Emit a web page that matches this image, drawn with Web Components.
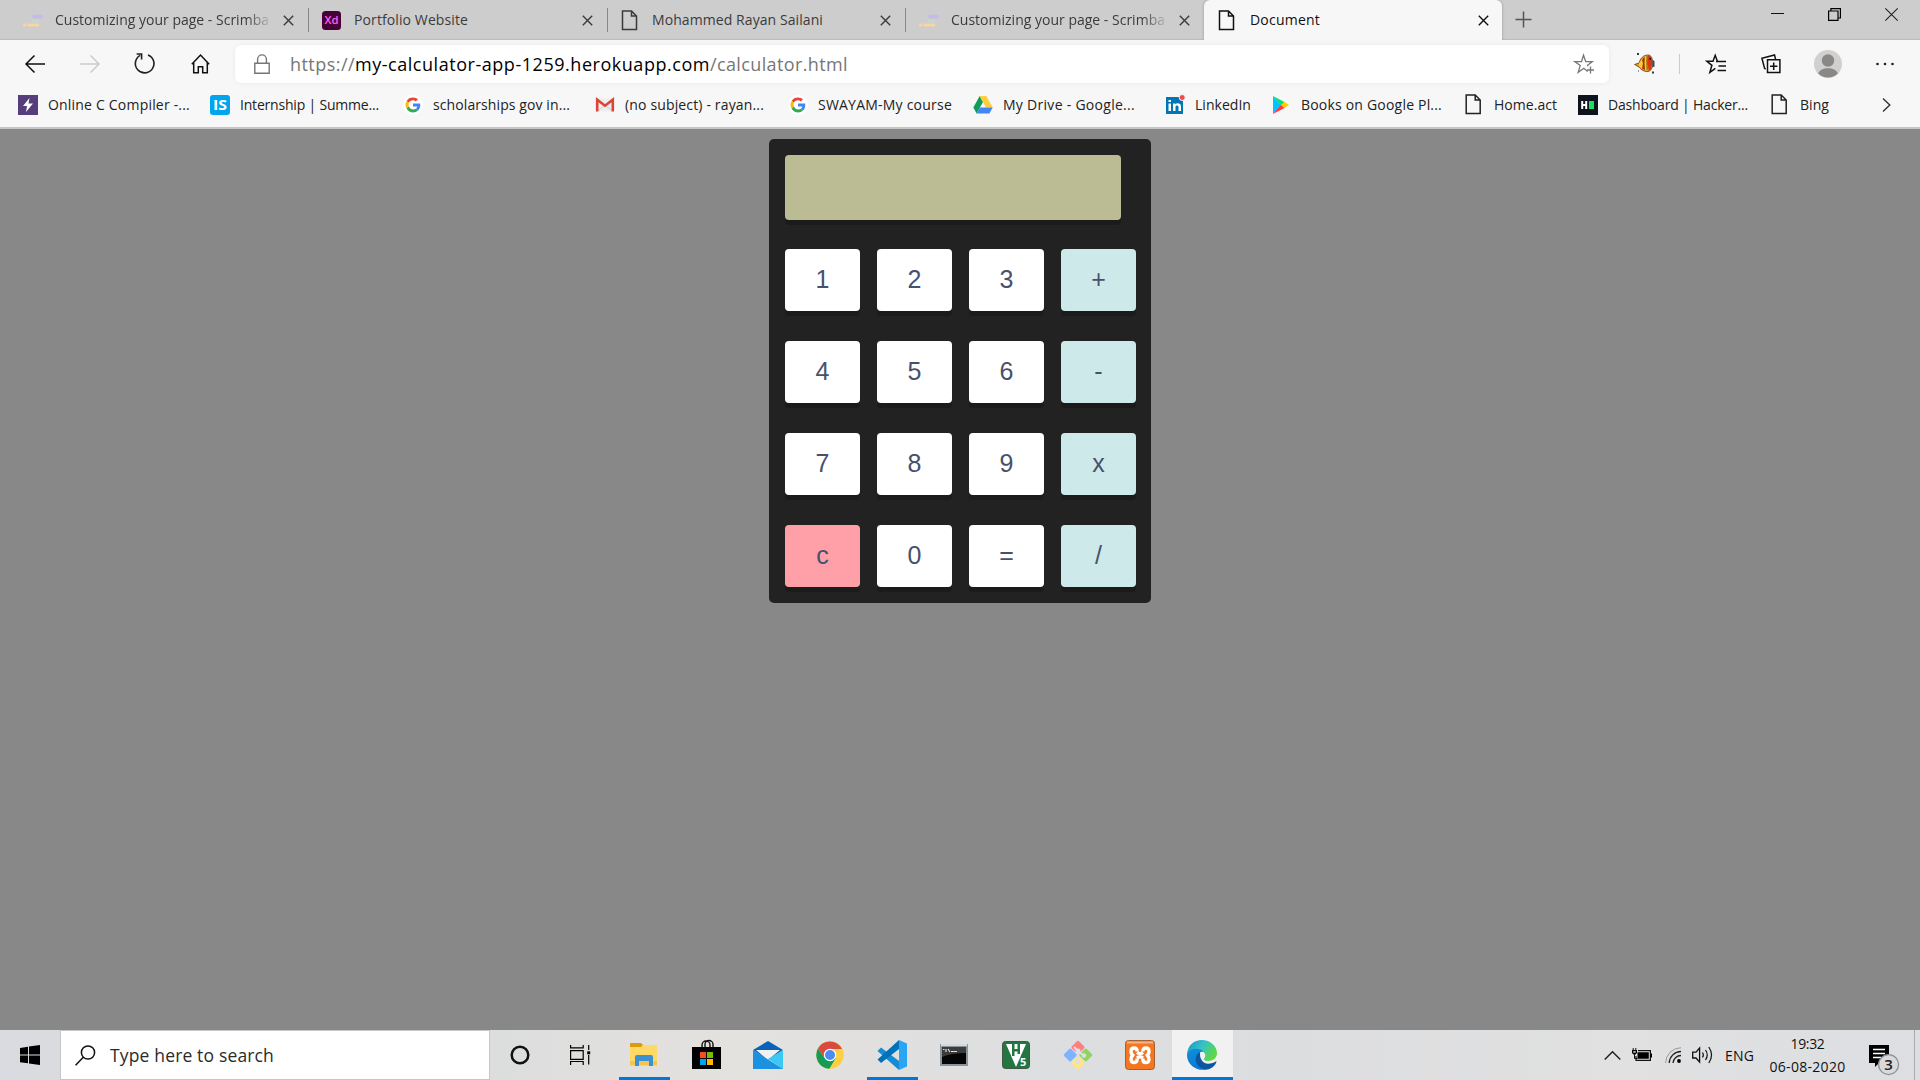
<!DOCTYPE html>
<html lang="en">
<head>
<meta charset="utf-8">
<title>Document</title>
<style>
html,body{margin:0;height:100%;overflow:hidden}
body{font-family:"Open Sans","Noto Sans",sans-serif;background:#888}
</style>
</head>
<body>
<desktop-screen></desktop-screen>
<script>
const google='<path fill="#ea4335" d="M4.9 7.2 2 5C3.700 1.900 6.700.500 10 .5c2.500 0 4.600.900 6.200 2.400L13.500 5.500C12.500 4.600 11.300 4.100 10 4.100c-2.400 0-4.300 1.400-5.100 3.100z"/><path fill="#fbbc05" d="M2 5l2.900 2.300a6.200 6.200 0 0 0 0 4.800L2 14.500A9.500 9.500 0 0 1 2 5z"/><path fill="#34a853" d="M2 14.500 4.900 12c1.500 3.700 5.900 4.600 8.600 2.700l2.900 2.200C12 21 4.800 19.800 2 14.500z"/><path fill="#4285f4" d="M10 8h8.900c.7 3.600-.4 6.900-2.500 8.900l-2.900-2.200c.9-.6 1.500-1.500 1.800-2.900H10z"/>';
const scrimba='<path stroke="#c5b9f5" stroke-width="3.600" stroke-linecap="round" d="M11 2.500h7"/><path stroke="#c4dcc9" stroke-width="2.600" stroke-linecap="round" d="M10 7.200h4.500"/><path stroke="#fdd3a1" stroke-width="3" stroke-linecap="round" d="M6 11h9M1.500 11h.5"/>';
const page='<path d="M1.500 1h9l5 5v13.500h-14zM10.500 1v5h5" fill="none" stroke="currentColor" stroke-width="1.500"/>';
/* name: [viewBox width, viewBox height, markup] */
const ICONS={
 scrimba:[20,13,scrimba],
 page:[17,21,page],
 xd:[19,19,'<rect width="19" height="19" rx="3.500" fill="#470137"/><text x="9.500" y="13.300" text-anchor="middle" font-family="Open Sans" font-size="11.500" font-weight="600" fill="#ff61f6" textLength="14" lengthAdjust="spacingAndGlyphs">Xd</text>'],
 close:[11,11,'<path d="M.8.8l9.400 9.400M10.200.8.8 10.200" stroke="currentColor" stroke-width="1.400"/>'],
 plus:[17,17,'<path d="M8.500.5v16M.5 8.500h16" stroke="#555" stroke-width="1.500"/>'],
 min:[13,13,'<path d="M0 5.500h13" stroke="#111" stroke-width="1"/>'],
 restore:[13,13,'<path d="M.6 3h9.400v9.400H.6zM2.900 3V.6h9.500V10H10" fill="none" stroke="#000" stroke-width="1.200"/>'],
 winclose:[13,13,'<path d="M.3.3l12.400 12.400M12.700.3.3 12.700" stroke="#222" stroke-width="1.100"/>'],
 back:[20,18,'<path d="M9.500.5 1 9l8.500 8.500M1 9h19" fill="none" stroke="currentColor" stroke-width="1.500"/>'],
 fwd:[20,18,'<path d="M10.500.5 19 9l-8.500 8.500M19 9H0" fill="none" stroke="currentColor" stroke-width="1.500"/>'],
 refresh:[21,21,'<path d="M14 1.900a9.300 9.300 0 1 1-7.800.5M2.600 1h5v5.500" fill="none" stroke="#222" stroke-width="1.600"/>'],
 home:[19,20,'<path d="M.8 10.300 9.500 1l8.700 9.300M2.700 8.500v10.300h4.600v-6h4.400v6h4.600V8.500" fill="none" stroke="#111" stroke-width="1.500"/>'],
 lock:[16,20,'<path d="M.8 9.200h14.400v10H.8zM3.600 9V5.300a4.400 4.400 0 0 1 8.800 0V9" fill="none" stroke="#767676" stroke-width="1.400"/>'],
 starplus:[20,20,'<path d="M13.700 17.500 9.800 14.300l-5.600 4 2-6.700L.8 7.600h6.700L9.500 1.200l2.200 6.400h6.600l-4.700 3.700.3 1" fill="none" stroke="#767676" stroke-width="1.300"/><path d="M16.500 12.500v7M13 16h7" stroke="#767676" stroke-width="1.300"/>'],
 fish:[22,22,'<path fill="#e79a1c" stroke="#4c2b12" stroke-width=".7" d="M.5 11.500 5 10c1.500-5 4.500-8 9-8 3 0 4.500 3 5 8-.5 5-2 8-5 8.500-3 .5-7-1.500-9-4.500z"/><path fill="#f5cf25" d="M5 10l3-3.500 1 4-1 5-3-2zM11 3.500l2.200-.8-.7 6.800 1 8-2.300-.5-1-7z"/><path fill="#d93414" d="M8 7l2.500-3-.5 6 1 7-3-1.500 1-5zM14 2.500h2l2 4.500.3 4-1.800 6-1.800.8-1-7z"/><path d="M13 3v14M10 5v11" stroke="#55240c" stroke-width=".7"/><path d="M18.500 7l2 1v5.500l-2 1z" fill="#394c58"/><path d="M3 0h2v2H3zM18 18.500h2v2h-2zM4 17.500h1v1H4z" fill="#273c47"/><circle cx="16.200" cy="5.800" r="1" fill="#151515"/>'],
 fav:[20,20,'<path d="M10 7.500h10M12.500 12H20M11.500 16.500H20" stroke="#111" stroke-width="1.500"/><path d="M11.500 7.500 9.200 1.300 7 7.300H.9l5 4-2 7 5.500-4" fill="none" stroke="#111" stroke-width="1.500"/>'],
 collections:[20,20,'<path d="M6.500 5.700h12.400v12.800H6.500zM4.600 15.200l-1-.8L.9 4.200 13.500.9l1.100 4.500M12.700 8.500v7.400M9 12.200h7.400" fill="none" stroke="#111" stroke-width="1.500"/>'],
 profile:[28,28,'<circle cx="14" cy="14" r="14" fill="#d2d0ce"/><circle cx="14" cy="10.500" r="6.200" fill="#8a8886"/><path d="M4.200 23.500c2-7 17.600-7 19.600 0A14 14 0 0 1 4.200 23.500z" fill="#8a8886"/>'],
 dots:[18,4,'<g fill="#222"><circle cx="1.500" cy="2" r="1.300"/><circle cx="9" cy="2" r="1.300"/><circle cx="16.500" cy="2" r="1.300"/></g>'],
 bolt:[20,20,'<path fill="#563d7c" d="M0 0h20v20H0z"/><path fill="#fff" d="M11.500 3 5 11h4l-1 6 7-8.500h-4.500z"/>'],
 is:[20,20,'<rect width="20" height="20" rx="3" fill="#00a5ec"/><text x="10" y="15.300" text-anchor="middle" font-family="Open Sans" font-size="15" font-weight="700" fill="#fff" textLength="14" lengthAdjust="spacingAndGlyphs">IS</text>'],
 google:[20,20,'<circle cx="10" cy="10" r="10" fill="#fff"/><g transform="translate(2 2) scale(.8)">'+google+'</g>'],
 gmail:[20,20,'<path fill="#eee" d="M1 3.500h18v13H1z"/><path d="M4 15 10 10l6 5" fill="none" stroke="#ccc"/><path d="M2.200 16.500V4.700l7.800 6 7.800-6v11.800" fill="none" stroke="#db4437" stroke-width="2.600"/>'],
 drive:[20,20,'<path fill="#0f9d58" d="M6.700 1 .3 12.500 3.600 18.500 10 7z"/><path fill="#ffcd40" d="M6.700 1h6.600l6.400 11.500H13z"/><path fill="#4285f4" d="M6.900 12.500h12.800l-3.300 6H3.600z"/>'],
 linkedin:[20,20,'<path fill="#0077b5" d="M1 2h17v17H1z"/><path fill="#fff" d="M3.500 8.500H6V16H3.500zM3.500 5H6v2H3.500zM8 8.500h2.300v1c1.500-2 5.700-1.500 5.700 2V16h-2.500v-4c0-2-3-2-3 0v4H8z"/><circle cx="17.200" cy="2.500" r="3" fill="#f04b4b" stroke="#f7f7f7"/>'],
 play:[20,20,'<path fill="#00c3ff" d="M2 1v18l8-9z"/><path fill="#00e676" d="M2 1l11.500 6L10 10.500z"/><path fill="#ff3a44" d="M2 19l11.500-6L10 9.500z"/><path fill="#ffce00" d="M13.500 7 18 10l-4.500 3L10 10z"/>'],
 file:[20,21,'<g transform="translate(.7 0)">'+page+'</g>'],
 hacker:[20,20,'<path fill="#0e141e" d="M0 0h20v20H0z"/><path d="M4.200 6v8M8.200 6v8M4 10h4" stroke="#fff" stroke-width="2"/><path fill="#1ce05b" d="M11 6h5v8h-5z"/>'],
 chevron:[9,14,'<path d="M1 .5 7.800 7 1 13.500" fill="none" stroke="#333" stroke-width="1.400"/>'],
 windows:[20,20,'<path d="M0 2.900 8 1.700v7.800H0zM9 1.600 20 0v9.500H9zM0 10.400h8v7.900L0 17.200zM9 10.400h11V20L9 18.400z"/>'],
 search:[21,21,'<circle cx="13" cy="7.500" r="6.600" fill="none" stroke="#111" stroke-width="1.500"/><path d="M8.300 12.300.6 20.300" stroke="#111" stroke-width="1.500"/>'],
 cortana:[20,20,'<circle cx="10" cy="10" r="8.300" fill="none" stroke="#111" stroke-width="2.500"/>'],
 taskview:[21,20,'<path d="M.6 5.600h12.600v8.800H.6zM.6 0v2.900h12.600V0M.6 20v-3.500h12.600V20M18.700 0v5M18.700 10v9.500" fill="none" stroke="#000" stroke-width="1.200"/><path d="M17.200 6.300h3v3h-3z"/>'],
 explorer:[28,24,'<path fill="#dc9b09" d="M0 0h11l2 2-2 3H0z"/><path fill="#ffd866" d="M0 4h11l2-2h14v20H0z"/><path fill="#f5c64c" d="M0 18h27v4.500H0z"/><path fill="#3c91d1" d="M5 23V14q0-2 2-2h14q2 0 2 2v9h-4v-5H9v5z"/>'],
 store:[29,30,'<path d="M10 7V5a4 4 0 0 1 8 0v2M13 7V4.500a4 4 0 0 1 8 0V7" fill="none" stroke="#111" stroke-width="1.400"/><path d="M0 7h29v22H0z"/><path fill="#f25022" d="M8 12h6v6H8z"/><path fill="#7fba00" d="M15 12h6v6h-6z"/><path fill="#00a4ef" d="M8 19h6v6H8z"/><path fill="#ffb900" d="M15 19h6v6h-6z"/>'],
 mail:[30,28,'<path fill="#0a62b8" d="M0 9 15 0l15 9-15 10z"/><path fill="#f1f1f1" d="M3 9h24L15 19z"/><path fill="#3cc8f4" d="M15 18 30 9v19z"/><path fill="#1b91df" d="M0 9v19h30z"/>'],
 chrome:[28,28,'<circle cx="14" cy="14" r="13.700" fill="#fdd043"/><path fill="#139b57" d="M2 7.300A13.700 13.700 0 0 0 13.300 27.700L19.800 17 14 20l-5.500-3z"/><path fill="#d94b3d" d="M2 7.300 8.500 17 14 8h12A13.700 13.700 0 0 0 2 7.300z"/><circle cx="14" cy="14" r="6.200" fill="#fff"/><circle cx="14" cy="14" r="5" fill="#4c8bf5"/>'],
 vscode:[30,30,'<path fill="#148bd4" d="M.5 11 4 7.500 22 21v9z"/><path fill="#0072b9" d="M22 0v9L4 23 .5 19.500z"/><path fill="#29a5f3" d="M22 0l8 3.500v23L22 30z"/>'],
 cmd:[28,24,'<path fill="#8b949b" d="M0 1h28v22H0z"/><path fill="#d2d9df" d="M1 1h26v2H1z"/><path fill="#050505" d="M2 4h24v17H2z"/><path fill="#3c3c3c" d="M2 4h24v6Q11 10 2 14z"/><path d="M3 6.500h1.500M6 6v3M8 6l2 3M11 8.500h6" stroke="#ddd" stroke-width="1.200"/>'],
 v5:[28,28,'<rect x=".5" y=".5" width="27" height="27" rx="3" fill="#237541" stroke="#454"/><path fill="#fff" d="M4 3h20L14 26z"/><path fill="#237541" d="M10 3h2.500v5h3V3H18v10h-2.500v-2.500h-3V15H10z"/><text x="18" y="25" font-family="Open Sans" font-size="11" font-weight="700" fill="#fff">5</text>'],
 git:[30,30,'<g transform="rotate(45 15 15)"><rect x="4.500" y="4.500" width="10" height="10" rx="1.500" fill="#ff7f7f"/><rect x="15.500" y="4.500" width="10" height="10" rx="1.500" fill="#91d365"/><rect x="4.500" y="15.500" width="10" height="10" rx="1.500" fill="#80b3ff"/><rect x="15.500" y="15.500" width="10" height="10" rx="1.500" fill="#ffe680"/></g><path d="M11 7l4 4v11M15 11l6 5" stroke="#dedfe0" stroke-width="2" fill="none"/><circle cx="15" cy="11" r="2.500" fill="#dedfe0"/><circle cx="21" cy="15.500" r="2.200" fill="#dedfe0"/><circle cx="15" cy="22" r="2.500" fill="#dedfe0"/>'],
 xampp:[30,30,'<rect x=".5" y=".5" width="29" height="29" rx="3" fill="#f37623" stroke="#a6602e"/><path fill="#fab184" d="M2 1.500h26v2H2z"/><path d="M12 11.500V10.500Q12 8 9.300 8Q6 8 6 11.200Q6 14 8 15.200Q6 16.500 6 19.200Q6 22.500 9.300 22.500Q12 22.500 12 20V18.500M18 11.500V10.500Q18 8 20.700 8Q24 8 24 11.200Q24 14 22 15.200Q24 16.500 24 19.200Q24 22.500 20.700 22.500Q18 22.500 18 20V18.500M12 12.500Q15 15 18 12.500M12 18Q15 15.500 18 18" fill="none" stroke="#fff" stroke-width="3.400" stroke-linejoin="round"/>'],
 edge:[30,30,'<defs><linearGradient id="a" x1="0" x2="1" y2=".5"><stop stop-color="#178fcb"/><stop offset=".5" stop-color="#35c1c9"/><stop offset="1" stop-color="#5ed846"/></linearGradient><linearGradient id="b" y1="0" x1="0" y2="1" x2=".5"><stop stop-color="#1290d7"/><stop offset="1" stop-color="#0878d4"/></linearGradient></defs><path fill="url(#a)" d="M0 14C1 5 7 0 15 0s15 6 15 13c0 5-4 8-9 8-3 0-4-1-4-2 0-1 2-2 1-5-2-5-12-6-18 0z"/><path fill="url(#b)" d="M0 14c4-7 13-6 17-2-4-1-6 2-7 6-1 6 4 11 10 11A15 15 0 0 1 0 14z"/><path fill="#0c55a1" d="M13 12c-7 4-5 14 3 17 6 2 11-2 13-6 1-2 0-2-1-1-6 3-12 2-14-3-1-2-1-4-1-7z"/>'],
 up:[17,9,'<path d="M.7 8.500 8.500.8l7.800 7.700" fill="none" stroke="#222" stroke-width="1.500"/>'],
 battery:[20,14,'<path d="M6 2.600h12.400v9.800H4V8" fill="none" stroke="#111" stroke-width="1.200"/><path d="M5.500 4.200h11.300v6.600H5.500zM18.500 5.500H20v4h-1.500zM0 2h5v3L3.500 6.500h-2L0 5z"/><path d="M1.200 0v3M3.800 0v3M2.500 6v4.500h3" stroke="#111" fill="none"/><path d="M1.300 3.200h2.400v1.500H1.300z" fill="#ddd"/>'],
 wifi:[16,16,'<path d="M.6 16A15.500 15.500 0 0 1 16 .7" fill="none" stroke="#999"/><path d="M4.200 16A12 12 0 0 1 16 4.500M8 16a8 8 0 0 1 8-7.500" fill="none" stroke="#222" stroke-width="1.300"/><circle cx="14" cy="14" r="1.900"/>'],
 sound:[22,18,'<path d="M.7 6.200H4L7.600 2v14L4 12H.7z" fill="none" stroke="#111" stroke-width="1.300"/><path d="M10.500 6.500q1.700 2.500 0 5M13.500 4q3.500 5 0 10M16.800 1q5.500 8 0 16" fill="none" stroke="#111" stroke-width="1.200"/>'],
 note:[30,30,'<path d="M0 0h20v18H10l-4 4v-4H0z"/><path d="M4 4.500h12M4 8.500h12M4 12.500h8" stroke="#fff" stroke-width="1.300"/><circle cx="19.600" cy="19.600" r="10" fill="#d8dadb" stroke="#8d8f90" stroke-width="1.200"/><text x="19.600" y="25" text-anchor="middle" font-family="Open Sans" font-size="15" font-weight="600" fill="#222">3</text>']
};
class Base extends HTMLElement{
 constructor(){super();this.attachShadow({mode:'open'})}
 a(n,d=''){return this.getAttribute(n)??d}
}
/* Inline SVG icon; w and h override the natural size */
customElements.define('ui-icon',class extends Base{
 connectedCallback(){
  const [w,h,m]=ICONS[this.a('name')],W=this.a('w',w),H=this.a('h',h);
  this.shadowRoot.innerHTML=`<style>:host{display:block;flex:none;width:${W}px;height:${H}px}svg{display:block;overflow:visible}</style><svg width="${W}" height="${H}" viewBox="0 0 ${w} ${h}">${m}</svg>`;
 }
});
/* One line of text whose tracking is adjusted to fill the given width */
customElements.define('fit-text',class extends Base{
 connectedCallback(){
  this.shadowRoot.innerHTML='<style>:host{display:block;flex:none;white-space:pre}span{display:inline-block}</style><span><slot></slot></span>';
  const s=this.shadowRoot.querySelector('span'),w=+this.a('w');
  this.style.fontSize=this.a('size','14')+'px';
  const n=this.textContent.length,nat=s.getBoundingClientRect().width;
  s.style.letterSpacing=(w-nat)/n+'px';
  this.style.width=w+'px';
 }
});
customElements.define('browser-tab',class extends Base{
 connectedCallback(){
  const on=this.hasAttribute('active');
  this.shadowRoot.innerHTML=`<style>
  :host{display:flex;flex:none;align-items:center;box-sizing:border-box;height:40px;width:${this.a('width')}px;padding-left:${this.a('pad')}px;color:${on?'#111':'#3b3b3b'};
  ${on?'background:#f7f7f7;border-radius:6px 6px 0 0;box-shadow:0 0 3px #0004;clip-path:inset(0 -4px 0 -4px)':''}}
  .i{width:${this.a('iw','33')}px;display:flex;flex:none}
  .t{width:${this.a('tw','219')}px;padding-bottom:2px;overflow:hidden;flex:none;${this.hasAttribute('fade')?'-webkit-mask-image:linear-gradient(90deg,#000 191px,transparent 218px)':''}}
  .x{margin-left:${this.a('cm','9')}px}.s{width:1px;height:24px;background:#888;margin-left:auto}
  </style><div class="i"><ui-icon name="${this.a('icon')}"></ui-icon></div><div class="t"><fit-text w="${this.a('w')}">${this.a('label')}</fit-text></div><ui-icon class="x" name="close"></ui-icon>${this.hasAttribute('sep')?'<div class="s"></div>':''}`;
 }
});
customElements.define('tab-strip',class extends Base{
 connectedCallback(){this.shadowRoot.innerHTML=`<style>
 :host{display:flex;height:40px;background:#cdcdcd;padding-left:10px;position:relative;box-shadow:inset 0 -2px 1px -1px #bbb}
 .plus{margin:11px 0 0 13px}.ctl{display:flex;margin-left:auto;padding:8px 22px 0 0;gap:44px}.ctl ui-icon:first-child{margin-right:1px}.ctl ui-icon:nth-child(2){margin-left:-1px}
 </style>
 <browser-tab icon="scrimba" label="Customizing your page - Scrimba" w="214" width="299" pad="13" iw="32" tw="219" cm="9" fade sep></browser-tab>
 <browser-tab icon="xd" label="Portfolio Website" w="114" width="299" pad="13" iw="32" tw="219" cm="9" sep></browser-tab>
 <browser-tab icon="page" label="Mohammed Rayan Sailani" w="171" width="298" pad="13" iw="31" tw="219" cm="9" sep></browser-tab>
 <browser-tab icon="scrimba" label="Customizing your page - Scrimba" w="214" width="298" pad="13" iw="32" tw="219" cm="9" fade></browser-tab>
 <browser-tab icon="page" label="Document" w="70" width="298" pad="14" iw="32" tw="219" cm="9" active></browser-tab>
 <ui-icon class="plus" name="plus"></ui-icon>
 <div class="ctl"><ui-icon name="min"></ui-icon><ui-icon name="restore"></ui-icon><ui-icon name="winclose"></ui-icon></div>`}
});
customElements.define('address-row',class extends Base{
 connectedCallback(){this.shadowRoot.innerHTML=`<style>
 :host{display:flex;align-items:center;height:47px;padding-left:25px;box-sizing:border-box;color:#111}
 .f{color:#ccc;margin-left:35px}.h{margin-left:36px}
 .bar{display:flex;align-items:center;flex:none;box-sizing:border-box;width:1374px;height:38px;margin:0 0 0 25px;padding:0 15px 0 19px;background:#fff;border-radius:6px;box-shadow:0 0 5px #0001}
 .bar .url{display:flex;margin-left:20px;color:#767676}.url b{font-weight:400;color:#000}
 .bar .star{margin-left:auto}.d{width:1px;height:20px;background:#ccc;margin:0 26px 0 23px}
 </style>
 <ui-icon name="back"></ui-icon><ui-icon class="f" name="fwd"></ui-icon><ui-icon name="refresh" style="margin-left:34px"></ui-icon><ui-icon class="h" name="home"></ui-icon>
 <div class="bar"><ui-icon name="lock"></ui-icon><div class="url"><fit-text size="18" w="65">https://</fit-text><b><fit-text size="18" w="355">my-calculator-app-1259.herokuapp.com</fit-text></b><fit-text size="18" w="138">/calculator.html</fit-text></div><ui-icon class="star" name="starplus"></ui-icon></div>
 <ui-icon name="fish" style="margin-left:25px"></ui-icon><div class="d"></div><ui-icon name="fav"></ui-icon><ui-icon name="collections" style="margin-left:35px"></ui-icon><ui-icon name="profile" style="margin-left:33px"></ui-icon><ui-icon name="dots" style="margin-left:34px"></ui-icon>`}
});
customElements.define('bookmark-item',class extends Base{
 connectedCallback(){this.shadowRoot.innerHTML=`<style>:host{display:flex;flex:none;align-items:center;gap:10px;width:${this.a('width')}px;color:#222}</style><ui-icon name="${this.a('icon')}"></ui-icon><fit-text w="${this.a('w')}">${this.a('label')}</fit-text>`}
});
customElements.define('bookmark-bar',class extends Base{
 connectedCallback(){
  const L=[['bolt','Online C Compiler -...',142,192],['is','Internship | Summe...',139,193],['google','scholarships gov in...',137,192],['gmail','(no subject) - rayan...',139,193],['google','SWAYAM-My course',134,185],['drive','My Drive - Google...',132,192],['linkedin','LinkedIn',56,106],['play','Books on Google Pl...',141,193],['file','Home.act',63,114],['hacker','Dashboard | Hacker...',140,192],['file','Bing',29,112]];
  this.shadowRoot.innerHTML=`<style>:host{display:flex;align-items:center;height:36px;padding:0 0 1px 18px;box-sizing:border-box}</style>`+L.map(([i,t,w,W])=>`<bookmark-item icon="${i}" label="${t}" w="${w}" width="${W}"></bookmark-item>`).join('')+'<ui-icon name="chevron"></ui-icon>';
 }
});
customElements.define('calc-key',class extends Base{
 connectedCallback(){this.shadowRoot.innerHTML=`<style>
 :host{display:flex;align-items:center;justify-content:center;box-sizing:border-box;height:62px;padding-bottom:1px;border-radius:4px;background:#fff;color:#47516d;font:25px "Liberation Sans",Arial,sans-serif;box-shadow:0 5px 0 #1b1b1b}
 :host([kind=op]){background:#cee9ea}:host([kind=clear]){background:#ff9fa8}
 </style><slot></slot>`}
});
customElements.define('calc-pad',class extends Base{
 connectedCallback(){
  const k=[...'123+456-789xc0=/'];
  this.shadowRoot.innerHTML=`<style>
 :host{display:block;box-sizing:border-box;width:382px;height:464px;padding:16px;background:#222;border-radius:5px}
 .screen{width:336px;height:65px;background:#bbbc94;border-radius:4px;box-shadow:0 5px 0 #1b1b1b}
 .keys{display:grid;grid-template-columns:repeat(4,75px);gap:30px 17px;margin-top:29px}
 </style><div class="screen"></div><div class="keys">${k.map(c=>`<calc-key ${'+-x/'.includes(c)?'kind="op"':c=='c'?'kind="clear"':''}>${c}</calc-key>`).join('')}</div>`}
});
customElements.define('task-button',class extends Base{
 connectedCallback(){this.shadowRoot.innerHTML=`<style>
 :host{display:flex;flex:none;align-items:center;justify-content:center;width:62px;height:50px;box-sizing:border-box}
 :host([open]){background:linear-gradient(#0078d7,#0078d7) center bottom/51px 3px no-repeat}
 :host([active]){background:linear-gradient(#0078d7,#0078d7) center bottom/61px 3px no-repeat,#f1f1f1;width:61px;margin-left:1px}
 :host([active]) ui-icon{margin-right:1px}
 </style><ui-icon name="${this.a('icon')}"></ui-icon>`}
});
customElements.define('task-bar',class extends Base{
 connectedCallback(){this.shadowRoot.innerHTML=`<style>
 :host{display:flex;align-items:center;height:50px;background:linear-gradient(90deg,#d9dbe0 0,#dcdddd 500px,#e4e2df 740px,#dddee0 1050px,#dcdddf 1300px,#e1e1e1 1620px,#dcdee1 1920px);color:#111}
 .search{display:flex;align-items:center;box-sizing:border-box;width:430px;height:50px;margin-left:20px;padding-left:14px;background:#fff;border:1px solid #c6c6c6;color:#2b2b2b}
 .search fit-text{margin-left:14px}
 .apps{display:flex;flex:none;margin-left:22px;width:620px}
 .time{display:flex;flex-direction:column;align-items:center;width:77px;margin-left:15px}.time fit-text{line-height:23px}
 .end{width:1px;height:50px;background:#aaa;margin-left:15px}
 </style>
 <ui-icon name="windows" style="margin-left:20px"></ui-icon>
 <div class="search"><ui-icon name="search"></ui-icon><fit-text size="17.500" w="164">Type here to search</fit-text></div>
 <ui-icon name="cortana" style="margin-left:20px"></ui-icon><ui-icon name="taskview" style="margin-left:40px"></ui-icon>
 <div class="apps"><task-button icon="explorer" open></task-button><task-button icon="store"></task-button><task-button icon="mail"></task-button><task-button icon="chrome"></task-button><task-button icon="vscode" open></task-button><task-button icon="cmd"></task-button><task-button icon="v5"></task-button><task-button icon="git"></task-button><task-button icon="xampp"></task-button><task-button icon="edge" active></task-button></div>
 <ui-icon name="up" style="margin-left:371px"></ui-icon><ui-icon name="battery" style="margin-left:11px"></ui-icon><ui-icon name="wifi" style="margin-left:13px"></ui-icon><ui-icon name="sound" style="margin-left:11px"></ui-icon><fit-text size="14" w="29" style="margin-left:11px">ENG</fit-text>
 <div class="time"><fit-text w="34">19:32</fit-text><fit-text w="76">06-08-2020</fit-text></div>
 <ui-icon name="note" style="margin:10px 0 0 23px"></ui-icon><div class="end"></div>`}
});
customElements.define('desktop-screen',class extends Base{
 connectedCallback(){this.shadowRoot.innerHTML=`<style>
 :host{display:flex;flex-direction:column;width:1920px;height:1080px}
 header{height:129px;flex:none;box-sizing:border-box;background:#f7f7f7;border-bottom:2px solid #c4c4c4}
 main{flex:1;display:flex;justify-content:center;align-items:flex-start;padding-top:10px;background:#888}
 </style><header><tab-strip></tab-strip><address-row></address-row><bookmark-bar></bookmark-bar></header><main><calc-pad></calc-pad></main><task-bar></task-bar>`}
});
</script>
</body>
</html>
